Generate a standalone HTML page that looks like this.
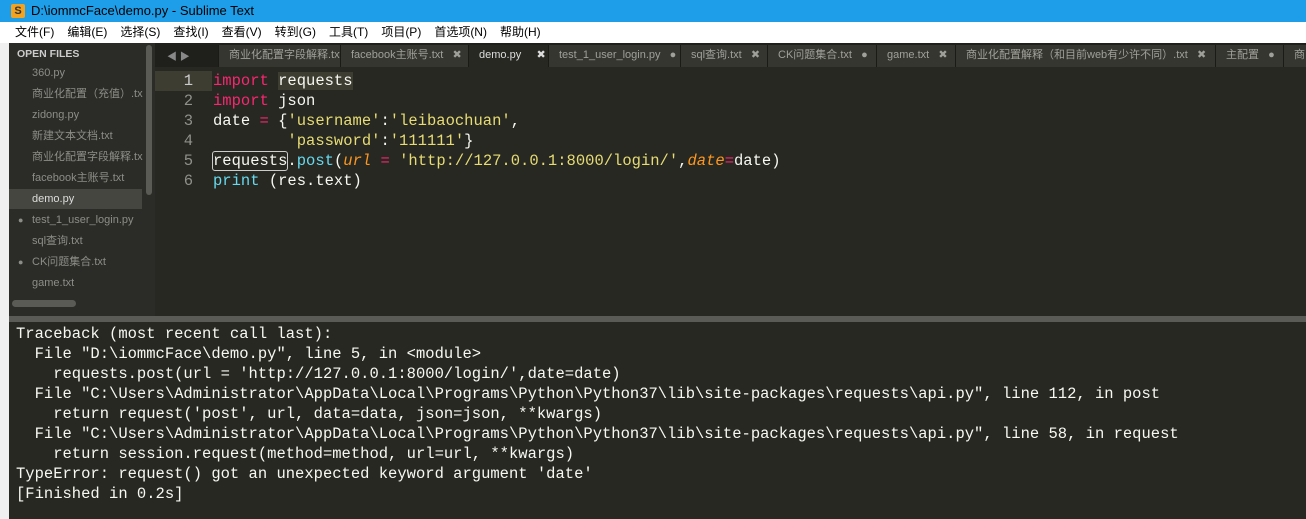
<!DOCTYPE html>
<html><head><meta charset="utf-8"><style>
*{margin:0;padding:0;box-sizing:border-box}
body{width:1306px;height:519px;overflow:hidden;background:#272822;position:relative;font-family:"Liberation Sans","Noto Sans CJK SC",sans-serif}
.abs{position:absolute}
#title{left:0;top:0;width:1306px;height:22px;background:#1e9ee8;color:#000;font-size:13px;line-height:22px}
#menu{left:0;top:22px;width:1306px;height:21px;background:#fff;font-size:12px;line-height:21px}
#menu span{margin-right:13px}
#strip{left:0;top:43px;width:9px;height:476px;background:#f0f0f0}
#side{left:9px;top:43px;width:146px;height:273px;background:#2b2c27;font-size:11px;color:#8d8d88}
#side div{position:absolute;left:23px;white-space:nowrap;line-height:14px;height:14px}
#tabs{left:155px;top:43px;width:1151px;height:24px;background:#1f201c;font-size:11px;color:#a0a09a}
.tab{position:absolute;top:2px;height:22px;line-height:20px;background:#35362f;border-left:1px solid #1a1a17;padding-left:10px;white-space:nowrap;overflow:hidden}
.tab.act{background:#272822;color:#ddd}
#editor{left:155px;top:67px;width:1151px;height:249px;background:#272822}
.code{font-family:"Liberation Mono",monospace;font-size:15.5px;line-height:20px;white-space:pre}
.ln{position:absolute;left:0;width:38px;text-align:right;color:#8f908a}
.k{color:#f92672}.s{color:#e6db74}.f{color:#66d9ef}.a{color:#fd971f;font-style:italic}
#div{left:9px;top:316px;width:1297px;height:6px;background:#5a5a57}
#out{left:9px;top:322px;width:1297px;height:197px;background:#272822;color:#f8f8f2}
</style></head><body>
<div id="title" class="abs"><span style="position:absolute;left:11px;top:4px;width:14px;height:14px;background:#f3a31f;border-radius:2px;font-size:11px;line-height:14px;text-align:center;font-weight:bold;color:#333">S</span><span style="position:absolute;left:31px">D:\iommcFace\demo.py - Sublime Text</span></div>
<div id="menu" class="abs"><div style="position:absolute;left:15px;white-space:nowrap"><span>文件(F)</span><span>编辑(E)</span><span>选择(S)</span><span>查找(I)</span><span>查看(V)</span><span>转到(G)</span><span>工具(T)</span><span>项目(P)</span><span>首选项(N)</span><span>帮助(H)</span></div></div>
<div id="strip" class="abs"></div>
<div id="side" class="abs">
<div style="left:8px;top:4px;font-weight:bold;color:#ccc;font-size:10.5px">OPEN FILES</div>
<div style="top:23px">360.py</div>
<div style="top:44px">商业化配置（充值）.tx</div>
<div style="top:65px">zidong.py</div>
<div style="top:86px">新建文本文档.txt</div>
<div style="top:107px">商业化配置字段解释.tx</div>
<div style="top:128px">facebook主账号.txt</div>
<div style="left:0;top:146px;width:133px;height:20px;background:#45463f"></div>
<div style="top:149px;color:#ddd">demo.py</div>
<div style="top:170px">test_1_user_login.py</div><div style="left:9px;top:170px;font-size:9px">●</div>
<div style="top:191px">sql查询.txt</div>
<div style="top:212px">CK问题集合.txt</div><div style="left:9px;top:212px;font-size:9px">●</div>
<div style="top:233px">game.txt</div>
<div style="left:137px;top:2px;width:6px;height:150px;background:#5a5b55;border-radius:3px"></div>
<div style="left:3px;top:257px;width:64px;height:7px;background:#5a5b55;border-radius:4px"></div>
</div>
<div id="tabs" class="abs">
<div style="position:absolute;left:12px;top:5px;color:#888;font-size:10px">◀ ▶</div>
<div class="tab" style="left:63px;width:122px">商业化配置字段解释.txt</div>
<div class="tab" style="left:185px;width:128px">facebook主账号.txt &nbsp; ✖</div>
<div class="tab act" style="left:313px;width:80px">demo.py &nbsp; &nbsp; ✖</div>
<div class="tab" style="left:393px;width:132px">test_1_user_login.py &nbsp; ●</div>
<div class="tab" style="left:525px;width:87px">sql查询.txt &nbsp; ✖</div>
<div class="tab" style="left:612px;width:109px">CK问题集合.txt &nbsp; ●</div>
<div class="tab" style="left:721px;width:79px">game.txt &nbsp; ✖</div>
<div class="tab" style="left:800px;width:260px">商业化配置解释（和目前web有少许不同）.txt &nbsp; ✖</div>
<div class="tab" style="left:1060px;width:68px">主配置 &nbsp; ●</div>
<div class="tab" style="left:1128px;width:30px">商</div>
</div>
<div id="editor" class="abs code">
<div style="position:absolute;left:0;top:4px;height:20px;background:#3e3d32;width:57px"></div>
<div class="ln" style="top:4px;color:#ccc">1</div><div class="ln" style="top:24px">2</div><div class="ln" style="top:44px">3</div><div class="ln" style="top:64px">4</div><div class="ln" style="top:84px">5</div><div class="ln" style="top:104px">6</div>
<div style="position:absolute;left:58px;top:4px;color:#f8f8f2"><span class="k">import</span> <span style="background:#3e3d32">requests</span>
<span class="k">import</span> json
date <span class="k">=</span> {<span class="s">'username'</span>:<span class="s">'leibaochuan'</span>,
        <span class="s">'password'</span>:<span class="s">'111111'</span>}
<span style="outline:1px solid #ccc;border-radius:2px">requests</span>.<span class="f">post</span>(<span class="a">url</span> <span class="k">=</span> <span class="s">'http://127.0.0.1:8000/login/'</span>,<span class="a">date</span><span class="k">=</span>date)
<span class="f">print</span> (res.text)</div>
</div>
<div id="div" class="abs"></div>
<div id="out" class="abs code" style="padding:2px 0 0 7px">Traceback (most recent call last):
  File "D:\iommcFace\demo.py", line 5, in &lt;module&gt;
    requests.post(url = 'http://127.0.0.1:8000/login/',date=date)
  File "C:\Users\Administrator\AppData\Local\Programs\Python\Python37\lib\site-packages\requests\api.py", line 112, in post
    return request('post', url, data=data, json=json, **kwargs)
  File "C:\Users\Administrator\AppData\Local\Programs\Python\Python37\lib\site-packages\requests\api.py", line 58, in request
    return session.request(method=method, url=url, **kwargs)
TypeError: request() got an unexpected keyword argument 'date'
[Finished in 0.2s]</div>
</body></html>
